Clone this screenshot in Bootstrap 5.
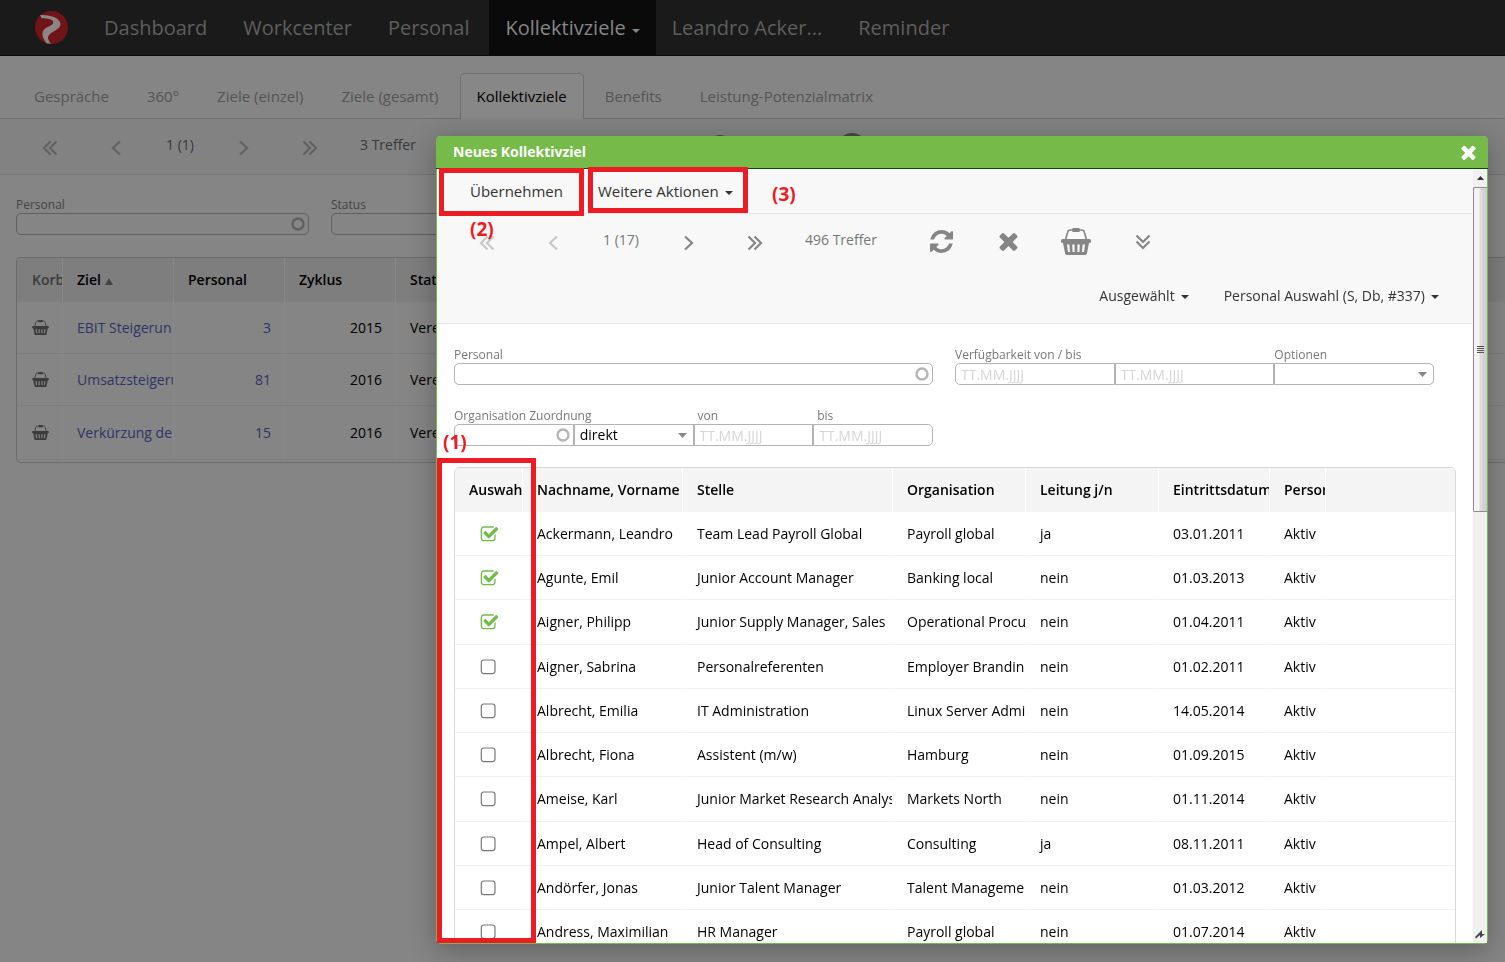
<!DOCTYPE html>
<html lang="de">
<head>
<meta charset="utf-8">
<meta name="viewport" content="width=device-width, initial-scale=1">
<title>Kollektivziele</title>
<link href="https://cdn.jsdelivr.net/npm/bootstrap@5.3.0/dist/css/bootstrap.min.css" rel="stylesheet">
<style>
  body { font-family: "Open Sans", sans-serif; font-size: 14px; line-height: 20px; color: #000; background: #858585; height: 100vh; overflow: hidden; }
  a { text-decoration: none; }

  /* top navigation */
  .topbar { background: #1a1a1a; border-bottom: 1px solid #0b0b0b; height: 56px; padding: 0 0 0 35px; }
  .topbar .navbar-brand { margin: 0 20px 0 0; padding: 0; }
  .topbar .navbar-nav .nav-link { font-size: 20px; line-height: 55px; color: #5e5e5e; padding: 0 20px 0 16px; }
  .topbar .navbar-nav .nav-link.active { background: #0a0a0a; color: #868686; padding-right: 16px; }
  .caret { display: inline-block; border: 4px solid transparent; border-top-color: currentColor; border-bottom: 0; margin-left: 6px; vertical-align: 2px; }

  /* sub tabs */
  .subtabs { padding: 17px 0 0 17px; gap: 4px; border-bottom: 1px solid #6f6f6f; }
  .subtabs .nav-link { font-size: 15px; line-height: 20px; padding: 12px 16px 13px; color: #555; border: 1px solid transparent; border-bottom: 0; border-radius: 5px 5px 0 0; margin-bottom: -1px; }
  .subtabs .nav-link.active { color: #000; background: #878787; border-color: #6f6f6f; }

  /* pager rows */
  .pager { height: 56px; }
  .pager button { width: 66px; height: 40px; border: 0; background: none; padding: 0; }
  .pager .act { width: 67px; padding-bottom: 2px; }
  .pager .pg { width: 70px; text-align: center; }
  .pager .hits { width: 120px; padding-left: 17px; }
  .ico { fill: currentColor; }
  .chev { fill: none; stroke: currentColor; stroke-width: 2.2; }
  .page-pager { background: #828282; border-bottom: 1px solid #747474; padding-left: 17px; color: #393939; }
  .page-pager button { color: #626262; }
  .page-pager .pg { width: 62px; }
  .page-tools { margin-left: 224px; gap: 66px; }
  .page-tools button { color: #484848; }

  /* filter fields */
  .lbl { display: block; font-size: 12px; line-height: 17px; white-space: nowrap; }
  .field { display: block; width: 100%; height: 22px; padding: 0 5px; font-size: 14px; line-height: 20px; border: 1px solid #b3b3b3; border-radius: 0; background: #fff; color: #000; appearance: none; }
  .field::placeholder { color: #d6d6d6; opacity: 1; }
  .field.first { border-radius: 5px 0 0 5px; }
  .field.last { border-radius: 0 5px 5px 0; }
  .field.single { border-radius: 5px; }
  .part { flex: 1 1 0; min-width: 0; }
  .ring { background-repeat: no-repeat; background-position: right 3px center; background-image: url("data:image/svg+xml,%3Csvg xmlns='http://www.w3.org/2000/svg' width='14' height='14'%3E%3Ccircle cx='7' cy='7' r='5.5' fill='none' stroke='%23b5b5b5' stroke-width='2.4'/%3E%3C/svg%3E"); }
  select.field { background-repeat: no-repeat; background-position: right 6px center; background-image: url("data:image/svg+xml,%3Csvg xmlns='http://www.w3.org/2000/svg' width='9' height='5'%3E%3Cpath d='M0 0h9L4.500 5z' fill='%23888'/%3E%3C/svg%3E"); }
  .page-filter { padding: 21px 0 22px 16px; gap: 22px; color: #444; }
  .page-filter > div { flex: 0 0 293px; }
  .page-filter .field { background-color: transparent; border-color: #606060; }
  .page-filter .ring { background-image: url("data:image/svg+xml,%3Csvg xmlns='http://www.w3.org/2000/svg' width='14' height='14'%3E%3Ccircle cx='7' cy='7' r='5.5' fill='none' stroke='%23606060' stroke-width='2.4'/%3E%3C/svg%3E"); }

  /* data grids */
  .grid-table { width: 100%; table-layout: fixed; border-collapse: separate; border-spacing: 0; }
  .grid-table th, .grid-table td { padding: 0 0 0 14px; overflow: hidden; white-space: nowrap; text-overflow: clip; border-right: 1px solid #fff; }
  .grid-table th { height: 44px; font-weight: 600; background: #f4f4f4; }
  .grid-table td { height: 44px; border-bottom: 1px solid #f2f2f2; }
  .grid-table tr:nth-child(4n+3) td { height: 45px; }
  .grid-table th:last-child, .grid-table td:last-child { border-right: 0; }
  .page-grid { margin-left: 16px; border: 1px solid #6c6c6c; border-right: 0; border-radius: 5px 0 0 5px; overflow: hidden; padding-bottom: 2px; }
  .page-grid th, .page-grid td { border-right-color: #888; }
  .page-grid th { background: #7e7e7e; }
  .page-grid .grid-table td { height: 52px; border-bottom-color: #7d7d7d; }
  .page-grid .grid-table tr:last-child td { height: 54px; }
  .page-grid td.num { text-align: right; padding-right: 13px; }
  .page-grid a { color: #2f3466; }
  .page-grid .korb { color: #3b3b3b; padding-left: 15px; }

  /* dialog */
  .dialog { position: fixed; left: 436px; right: 17px; top: 136px; bottom: 18px; border: 1px solid #76bb4a; border-top: 0; border-radius: 5px; box-shadow: 0 6px 28px rgba(0,0,0,.28); background: #fff; }
  .dialog-head { background: #76bb4a; border-bottom: 1px solid #0d4a05; height: 33px; margin: 0 -1px; padding: 0 12px 0 17px; border-radius: 5px 5px 0 0; color: #fff; }
  .dialog-head h1 { font-size: 14px; line-height: 32px; font-weight: 700; margin: 0; }
  .dialog-head button { border: 0; background: none; padding: 0; color: #fff; line-height: 0; }
  .dialog-main { min-width: 0; overflow: hidden; }
  .band { background: #f8f8f8; border-bottom: 1px solid #e4e4e4; }
  .menu-btn { border: 0; background: none; padding: 0; color: #333; }
  .actions { height: 45px; padding-left: 33px; gap: 35px; font-size: 15px; }
  .dlg-pager { padding-left: 17px; color: #777; }
  .dlg-pager button { color: #858585; }
  .dlg-pager button:disabled { color: #c8c8c8; }
  .views { height: 53px; padding: 0 33px 2px 0; gap: 35px; }
  .dlg-filter { padding: 22px 38px 21px 17px; gap: 22px; color: #777; }
  .dlg-filter > div { flex: 0 1 calc(50% - 11px); }
  .dlg-grid { margin: 0 16px 0 17px; border: 1px solid #d8d8d8; border-radius: 5px 5px 0 0; overflow: hidden; }
  .tick { display: block; appearance: none; width: 19px; height: 19px; margin: 1px 0 0 11px; background-image: url("data:image/svg+xml,%3Csvg xmlns='http://www.w3.org/2000/svg' viewBox='0 0 1792 1792'%3E%3Crect x='122' y='186' width='1290' height='1290' rx='240' fill='none' stroke='%23777' stroke-width='112'/%3E%3C/svg%3E"); }
  .tick:checked { background-image: url("data:image/svg+xml,%3Csvg xmlns='http://www.w3.org/2000/svg' viewBox='0 0 1792 1792'%3E%3Cpath fill='%2372bb48' d='M1472 930v318q0 119-84.500 203.500t-203.500 84.500h-832q-119 0-203.500-84.500t-84.500-203.500v-832q0-119 84.500-203.500t203.500-84.500h832q63 0 117 25 15 7 18 23 3 17-9 29l-49 49q-10 10-23 10-3 0-9-2-23-6-45-6h-832q-66 0-113 47t-47 113v832q0 66 47 113t113 47h832q66 0 113-47t47-113v-254q0-13 9-22l64-64q10-10 23-10 6 0 12 3 20 8 20 29zm231-489l-814 814q-24 24-57 24t-57-24l-430-430q-24-24-24-57t24-57l110-110q24-24 57-24t57 24l263 263 647-647q24-24 57-24t57 24l110 110q24 24 24 57t-24 57z'/%3E%3C/svg%3E"); }

  /* scroll rail */
  .rail { width: 15px; background: #f0f0f0; border-left: 1px solid #fafafa; }
  .rail-up { height: 18px; }
  .rail-thumb { height: 42%; border: 1px solid #8c8c8c; border-right: 0; border-radius: 2px 0 0 2px; background: linear-gradient(90deg, #f4f4f4 0 35%, #dcdce0 50%, #c8c8ce); }

  /* annotations lying over the dialog */
  .mark-box { position: absolute; border: 5px solid #ed1c24; pointer-events: none; }
  .mark-no { position: absolute; color: #ed1c24; font-size: 19px; line-height: 24px; font-weight: 700; }
  .box-1 { left: 0; top: 322px; bottom: 0; width: 99px; }
  .box-2 { left: 2px; top: 32px; width: 145px; height: 48px; }
  .box-3 { left: 151px; top: 31px; width: 160px; height: 46px; }
  .no-1 { left: 6px; top: 294px; }
  .no-2 { left: 33px; top: 81px; }
  .no-3 { left: 335px; top: 46px; }
</style>
</head>
<body>

<svg class="d-none" xmlns="http://www.w3.org/2000/svg">
  <symbol id="dbl-left" viewBox="0 0 16 16"><path d="M8.500 1.500 2 8l6.500 6.500M14.500 1.500 8 8l6.500 6.500"/></symbol>
  <symbol id="one-left" viewBox="0 0 16 16"><path d="M12 1.500 5 8l7 6.500"/></symbol>
  <symbol id="one-right" viewBox="0 0 16 16"><path d="m4 1.500 7 6.500-7 6.500"/></symbol>
  <symbol id="dbl-right" viewBox="0 0 16 16"><path d="M1.500 1.500 8 8l-6.500 6.500M7.500 1.500 14 8l-6.500 6.500"/></symbol>
  <symbol id="dbl-down" viewBox="0 0 16 16"><path d="M1.500 1.500 8 8l6.500-6.500M1.500 7.500 8 14l6.500-6.500"/></symbol>
  <symbol id="times" viewBox="302 302 1188 1252"><path d="M1490 1322q0 40-28 68l-136 136q-28 28-68 28t-68-28l-294-294-294 294q-28 28-68 28t-68-28l-136-136q-28-28-28-68t28-68l294-294-294-294q-28-28-28-68t28-68l136-136q28-28 68-28t68 28l294 294 294-294q28-28 68-28t68 28l136 136q28 28 28 68t-28 68l-294 294 294 294q28 28 28 68z"/></symbol>
  <symbol id="refresh" viewBox="128 128 1536 1536"><path d="M1639 1056q0 5-1 7-64 268-268 434.500t-478 166.500q-146 0-282.500-55t-243.500-157l-129 129q-19 19-45 19t-45-19-19-45v-448q0-26 19-45t45-19h448q26 0 45 19t19 45-19 45l-137 137q71 66 161 102t187 36q134 0 250-65t186-179q11-17 53-117 8-23 30-23h192q13 0 22.500 9.500t9.500 22.500zm25-800v448q0 26-19 45t-45 19h-448q-26 0-45-19t-19-45 19-45l138-138q-148-137-349-137-134 0-250 65t-186 179q-11 17-53 117-8 23-30 23h-199q-13 0-22.500-9.500t-9.500-22.500v-7q65-268 270-434.500t480-166.500q146 0 284 55.500t245 156.500l130-129q19-19 45-19t45 19 19 45z"/></symbol>
  <symbol id="basket" viewBox="0 0 30 27">
    <path d="M4.500 12 6.500 4.500Q7 2 9.500 2H20.500Q23 2 23.500 4.500L25.500 12" fill="none" stroke="currentColor" stroke-width="1.600"/>
    <rect x="11" y="0" width="8" height="4" rx="1.500"/>
    <path fill-rule="evenodd" d="M1.500 11h27a1.500 1.500 0 0 1 1.500 1.500v1a1.500 1.500 0 0 1-1.500 1.500h-.5l-2 10a2 2 0 0 1-2 2H6a2 2 0 0 1-2-2L2 15h-.5A1.500 1.500 0 0 1 0 13.500v-1A1.500 1.500 0 0 1 1.500 11zM6 16.500l1 7.500h2l-.6-7.500zm5.200 0 .4 7.500h2v-7.500zm5.200 0V24h2l.4-7.500zm5.200 0L21 24h2l1-7.500z"/>
  </symbol>
</svg>

<nav class="navbar topbar navbar-expand flex-nowrap">
  <a class="navbar-brand" href="#" aria-label="Start">
    <svg class="d-block" width="33" height="33" viewBox="0 0 33 33"><circle cx="16.500" cy="16.500" r="16.500" fill="#701418"/><path d="M5 4C13 3.500 25 6 25.500 13c.2 5-7.500 7-11 10.500-2.500 2.500-1.500 6 1.500 9.300l-4.500-.6C7.500 27 6 22 9 18.500c3-3.200 9-3.500 9.200-7C18.400 8 13 7.500 6.500 7z" fill="#8d8585"/></svg>
  </a>
  <div class="navbar-nav">
    <a class="nav-link" href="#">Dashboard</a>
    <a class="nav-link" href="#">Workcenter</a>
    <a class="nav-link" href="#">Personal</a>
    <a class="nav-link active" href="#">Kollektivziele<span class="caret"></span></a>
    <a class="nav-link" href="#">Leandro Acker...</a>
    <a class="nav-link" href="#">Reminder</a>
  </div>
</nav>

<nav class="nav subtabs flex-nowrap">
  <a class="nav-link" href="#">Gespräche</a>
  <a class="nav-link" href="#">360°</a>
  <a class="nav-link" href="#">Ziele (einzel)</a>
  <a class="nav-link" href="#">Ziele (gesamt)</a>
  <a class="nav-link active" href="#">Kollektivziele</a>
  <a class="nav-link" href="#">Benefits</a>
  <a class="nav-link" href="#">Leistung-Potenzialmatrix</a>
</nav>

<div class="pager page-pager d-flex align-items-center">
  <button aria-label="Erste Seite"><svg class="chev" width="16" height="16"><use href="#dbl-left"/></svg></button>
  <button aria-label="Zurück"><svg class="chev" width="16" height="16"><use href="#one-left"/></svg></button>
  <span class="pg pb-1">1 (1)</span>
  <button aria-label="Weiter"><svg class="chev" width="16" height="16"><use href="#one-right"/></svg></button>
  <button aria-label="Letzte Seite"><svg class="chev" width="16" height="16"><use href="#dbl-right"/></svg></button>
  <span class="hits pb-1">3 Treffer</span>
  <div class="page-tools d-flex">
    <button aria-label="Suchen"><svg class="ico" width="24" height="24"><circle cx="12" cy="12" r="12"/></svg></button>
    <button aria-label="Hilfe"><svg class="ico" width="28" height="28"><circle cx="14" cy="14" r="14"/></svg></button>
  </div>
</div>

<div class="page-filter d-flex">
  <div><label class="lbl" for="p1">Personal</label><input class="field single ring" id="p1" type="text"></div>
  <div><label class="lbl" for="p2">Status</label><input class="field single" id="p2" type="text"></div>
</div>

<div class="page-grid">
  <table class="grid-table">
    <colgroup><col style="width:46px"><col style="width:111px"><col style="width:111px"><col style="width:111px"><col></colgroup>
    <thead><tr><th class="korb">Korb</th><th>Ziel <svg width="8" height="7" viewBox="0 0 8 7"><path d="M4 0 8 7H0z" fill="#444"/></svg></th><th>Personal</th><th>Zyklus</th><th>Status</th></tr></thead>
    <tbody>
      <tr><td class="korb"><svg class="ico d-block" width="17" height="15"><use href="#basket"/></svg></td><td><a href="#">EBIT Steigerun</a></td><td class="num"><a href="#">3</a></td><td class="num">2015</td><td>Vereinbart</td></tr>
      <tr><td class="korb"><svg class="ico d-block" width="17" height="15"><use href="#basket"/></svg></td><td><a href="#">Umsatzsteigerung</a></td><td class="num"><a href="#">81</a></td><td class="num">2016</td><td>Vereinbart</td></tr>
      <tr><td class="korb"><svg class="ico d-block" width="17" height="15"><use href="#basket"/></svg></td><td><a href="#">Verkürzung de</a></td><td class="num"><a href="#">15</a></td><td class="num">2016</td><td>Vereinbart</td></tr>
    </tbody>
  </table>
</div>

<section class="dialog d-flex flex-column" role="dialog" aria-labelledby="dlg-title">
  <header class="dialog-head d-flex align-items-center justify-content-between">
    <h1 id="dlg-title">Neues Kollektivziel</h1>
    <button aria-label="Schließen"><svg class="ico" width="15" height="15"><use href="#times"/></svg></button>
  </header>

  <div class="d-flex flex-fill overflow-hidden">
    <div class="dialog-main flex-fill">
      <div class="band actions d-flex align-items-center">
        <button class="menu-btn">Übernehmen</button>
        <button class="menu-btn">Weitere Aktionen<span class="caret"></span></button>
      </div>
      <div class="band">
        <div class="pager dlg-pager d-flex align-items-center">
          <button disabled aria-label="Erste Seite"><svg class="chev" width="16" height="16"><use href="#dbl-left"/></svg></button>
          <button disabled aria-label="Zurück"><svg class="chev" width="16" height="16"><use href="#one-left"/></svg></button>
          <span class="pg pb-1">1 (17)</span>
          <button aria-label="Weiter"><svg class="chev" width="16" height="16"><use href="#one-right"/></svg></button>
          <button aria-label="Letzte Seite"><svg class="chev" width="16" height="16"><use href="#dbl-right"/></svg></button>
          <span class="hits pb-1">496 Treffer</span>
          <button class="act" aria-label="Aktualisieren"><svg class="ico" width="23" height="23"><use href="#refresh"/></svg></button>
          <button class="act" aria-label="Leeren"><svg class="ico" width="19" height="19"><use href="#times"/></svg></button>
          <button class="act" aria-label="Korb"><svg class="ico" width="30" height="27"><use href="#basket"/></svg></button>
          <button class="act" aria-label="Mehr"><svg class="chev" width="16" height="16"><use href="#dbl-down"/></svg></button>
        </div>
        <div class="views d-flex align-items-center justify-content-end">
          <button class="menu-btn">Ausgewählt<span class="caret"></span></button>
          <button class="menu-btn">Personal Auswahl (S, Db, #337)<span class="caret"></span></button>
        </div>
      </div>

      <form class="dlg-filter d-flex flex-wrap">
        <div><label class="lbl" for="f1">Personal</label><input class="field single ring" id="f1" type="text"></div>
        <div class="d-flex">
          <div class="part"><label class="lbl" for="f2">Verfügbarkeit von / bis</label><input class="field first" id="f2" placeholder="TT.MM.JJJJ"></div>
          <div class="part"><label class="lbl" for="f3">&nbsp;</label><input class="field" id="f3" placeholder="TT.MM.JJJJ" aria-label="Verfügbarkeit bis"></div>
          <div class="part"><label class="lbl" for="f4">Optionen</label><select class="field last" id="f4"><option></option></select></div>
        </div>
        <div class="d-flex">
          <div class="part"><label class="lbl" for="f5">Organisation Zuordnung</label><input class="field first ring" id="f5"></div>
          <div class="part"><label class="lbl" for="f6">&nbsp;</label><select class="field" id="f6" aria-label="Zuordnung"><option>direkt</option></select></div>
          <div class="part"><label class="lbl ps-1" for="f7">von</label><input class="field" id="f7" placeholder="TT.MM.JJJJ"></div>
          <div class="part"><label class="lbl ps-1" for="f8">bis</label><input class="field last" id="f8" placeholder="TT.MM.JJJJ"></div>
        </div>
      </form>

      <div class="dlg-grid">
        <table class="grid-table">
          <colgroup><col style="width:68px"><col style="width:160px"><col style="width:210px"><col style="width:133px"><col style="width:133px"><col style="width:111px"><col style="width:56px"><col></colgroup>
          <thead><tr><th>Auswahl</th><th>Nachname, Vorname</th><th>Stelle</th><th>Organisation</th><th>Leitung j/n</th><th>Eintrittsdatum</th><th>Personalstatus</th><th></th></tr></thead>
          <tbody>
            <tr><td><input class="tick" type="checkbox" checked aria-label="Ackermann, Leandro"></td><td>Ackermann, Leandro</td><td>Team Lead Payroll Global</td><td>Payroll global</td><td>ja</td><td>03.01.2011</td><td>Aktiv</td><td></td></tr>
            <tr><td><input class="tick" type="checkbox" checked aria-label="Agunte, Emil"></td><td>Agunte, Emil</td><td>Junior Account Manager</td><td>Banking local</td><td>nein</td><td>01.03.2013</td><td>Aktiv</td><td></td></tr>
            <tr><td><input class="tick" type="checkbox" checked aria-label="Aigner, Philipp"></td><td>Aigner, Philipp</td><td>Junior Supply Manager, Sales</td><td>Operational Procu</td><td>nein</td><td>01.04.2011</td><td>Aktiv</td><td></td></tr>
            <tr><td><input class="tick" type="checkbox" aria-label="Aigner, Sabrina"></td><td>Aigner, Sabrina</td><td>Personalreferenten</td><td>Employer Brandin</td><td>nein</td><td>01.02.2011</td><td>Aktiv</td><td></td></tr>
            <tr><td><input class="tick" type="checkbox" aria-label="Albrecht, Emilia"></td><td>Albrecht, Emilia</td><td>IT Administration</td><td>Linux Server Admi</td><td>nein</td><td>14.05.2014</td><td>Aktiv</td><td></td></tr>
            <tr><td><input class="tick" type="checkbox" aria-label="Albrecht, Fiona"></td><td>Albrecht, Fiona</td><td>Assistent (m/w)</td><td>Hamburg</td><td>nein</td><td>01.09.2015</td><td>Aktiv</td><td></td></tr>
            <tr><td><input class="tick" type="checkbox" aria-label="Ameise, Karl"></td><td>Ameise, Karl</td><td>Junior Market Research Analyst</td><td>Markets North</td><td>nein</td><td>01.11.2014</td><td>Aktiv</td><td></td></tr>
            <tr><td><input class="tick" type="checkbox" aria-label="Ampel, Albert"></td><td>Ampel, Albert</td><td>Head of Consulting</td><td>Consulting</td><td>ja</td><td>08.11.2011</td><td>Aktiv</td><td></td></tr>
            <tr><td><input class="tick" type="checkbox" aria-label="Andörfer, Jonas"></td><td>Andörfer, Jonas</td><td>Junior Talent Manager</td><td>Talent Manageme</td><td>nein</td><td>01.03.2012</td><td>Aktiv</td><td></td></tr>
            <tr><td><input class="tick" type="checkbox" aria-label="Andress, Maximilian"></td><td>Andress, Maximilian</td><td>HR Manager</td><td>Payroll global</td><td>nein</td><td>01.07.2014</td><td>Aktiv</td><td></td></tr>
          </tbody>
        </table>
      </div>
    </div>

    <div class="rail d-flex flex-column flex-shrink-0" aria-hidden="true">
      <div class="rail-up d-flex align-items-center justify-content-center"><svg width="7" height="4" viewBox="0 0 7 4"><path d="M3.500 0 7 4H0z" fill="#333"/></svg></div>
      <div class="rail-thumb d-flex align-items-center justify-content-center"><svg width="7" height="8" viewBox="0 0 7 8"><path d="M0 .5h7M0 2.500h7M0 4.500h7M0 6.500h7" stroke="#555"/></svg></div>
      <svg class="mt-auto mx-auto mb-1" width="10" height="9" viewBox="0 0 10 9"><path d="M0 7 7 0v4h3L5 8V5L1 8.500z" fill="#444"/></svg>
    </div>
  </div>

  <div class="mark-box box-1"></div>
  <div class="mark-box box-2"></div>
  <div class="mark-box box-3"></div>
  <span class="mark-no no-1">(1)</span>
  <span class="mark-no no-2">(2)</span>
  <span class="mark-no no-3">(3)</span>
</section>

<script src="https://cdn.jsdelivr.net/npm/bootstrap@5.3.0/dist/js/bootstrap.bundle.min.js"></script>
</body>
</html>
